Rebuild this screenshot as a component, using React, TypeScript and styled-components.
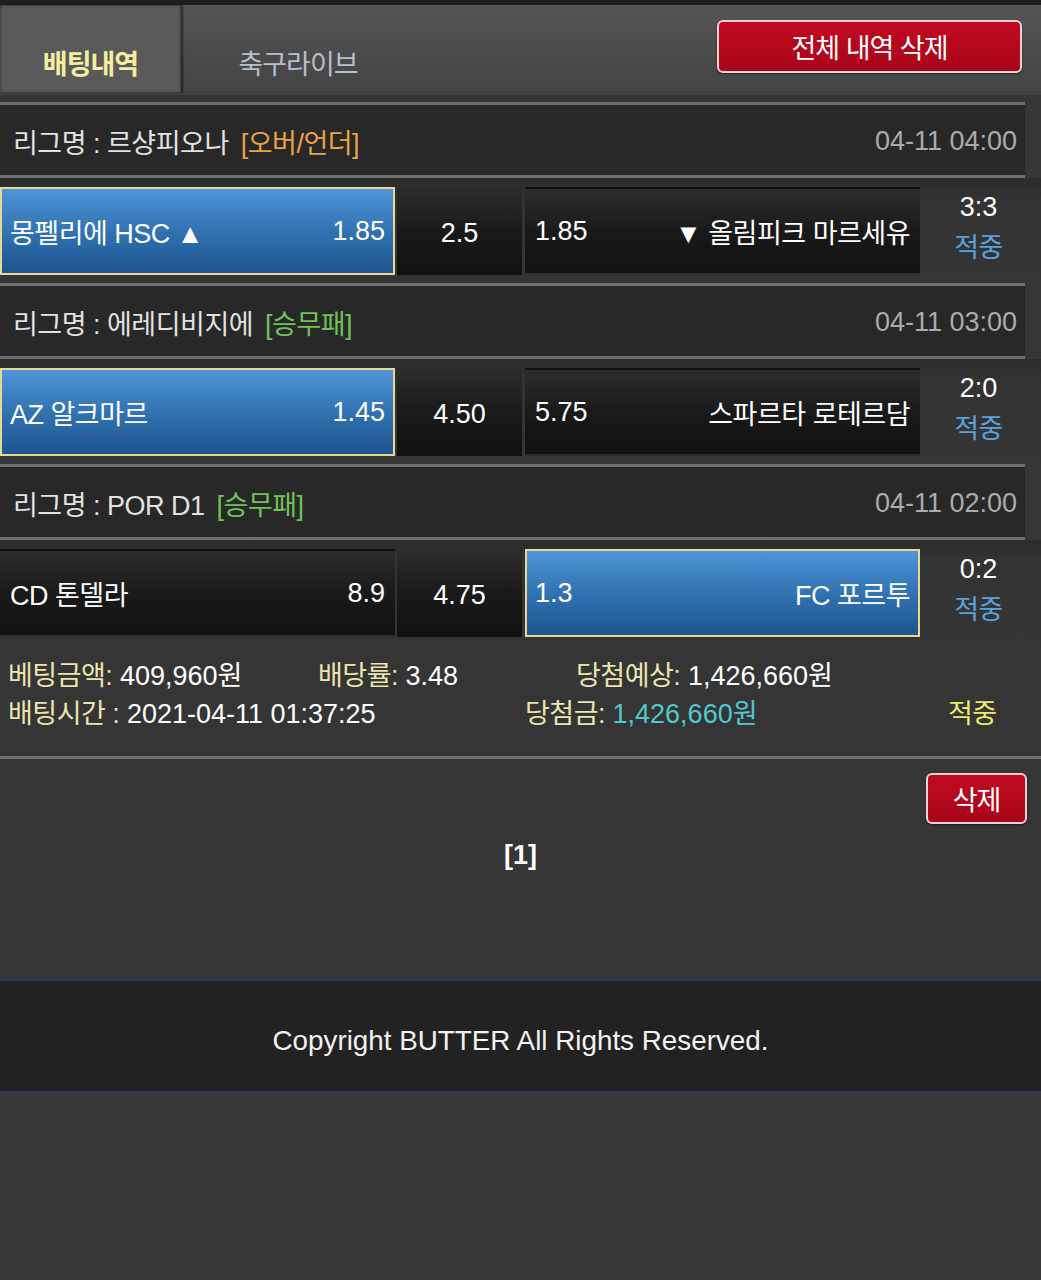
import React from 'react';
import styled, { createGlobalStyle } from 'styled-components';

const GlobalStyle = createGlobalStyle`
  html, body {
    margin: 0;
    padding: 0;
    background: #393939;
  }
  body {
    font-family: "Liberation Sans", "Noto Sans CJK KR", sans-serif;
    color: #f2f2f2;
  }
  * { box-sizing: border-box; }
`;

const Page = styled.div`
  width: 1041px;
  min-height: 1280px;
  background: #393939;
`;

const Main = styled.div`
  background: #363636;
`;

const TopBar = styled.div`
  display: flex;
  height: 95px;
  border-top: 5px solid #1e1e1e;
  background: linear-gradient(#555555, #434343);
  margin-bottom: 7px;
`;

const Tab = styled.div<{ $active?: boolean }>`
  display: flex;
  align-items: flex-end;
  justify-content: center;
  padding-bottom: 11px;
  width: ${(p) => (p.$active ? '181px' : '234px')};
  height: 88px;
  font-size: 27px;
  letter-spacing: -1px;
  font-weight: ${(p) => (p.$active ? 700 : 400)};
  color: ${(p) => (p.$active ? '#f3eea0' : '#b6bfcb')};
  background: ${(p) => (p.$active ? '#595959' : 'transparent')};
  box-shadow: ${(p) => (p.$active ? 'inset 0 0 3px rgba(0,0,0,0.6), 2px 0 2px rgba(0,0,0,0.5)' : 'none')};
`;

const RedButton = styled.button<{ $wide?: boolean }>`
  width: ${(p) => (p.$wide ? '305px' : '101px')};
  height: ${(p) => (p.$wide ? '53px' : '51px')};
  border: 2px solid #ecd2d4;
  border-radius: 6px;
  background: linear-gradient(#c00a20, #a8061a);
  color: #ffffff;
  font-family: inherit;
  font-size: 27px;
  letter-spacing: -1px;
  cursor: pointer;
  box-shadow: 0 1px 2px rgba(0, 0, 0, 0.5);
`;

const TopButtonWrap = styled.div`
  margin-left: auto;
  margin-right: 19px;
  padding-top: 15px;
`;

const LeagueHeader = styled.div`
  display: flex;
  align-items: center;
  justify-content: space-between;
  height: 76px;
  margin-right: 16px;
  padding: 2px 8px 0 13px;
  background: #282828;
  border-top: 3px solid #6e6e6e;
  border-bottom: 3px solid #6e6e6e;
  font-size: 27px;
  color: #e2e2e2;
`;

const LeagueName = styled.span`
  letter-spacing: -0.5px;
`;

const BetType = styled.span<{ $color: string }>`
  margin-left: 12px;
  color: ${(p) => p.$color};
`;

const KickOff = styled.span`
  color: #ababab;
`;

const MatchRow = styled.div`
  display: flex;
  height: 105px;
  padding: 9px 0 8px;
  background: linear-gradient(#2c2c2c, #333333 20%, #353535);
`;

const OddsBox = styled.div<{ $picked?: boolean; $reverse?: boolean }>`
  display: flex;
  align-items: center;
  justify-content: space-between;
  flex-direction: ${(p) => (p.$reverse ? 'row-reverse' : 'row')};
  width: 395px;
  height: 88px;
  padding: 0 8px;
  font-size: 27px;
  color: #ffffff;
  border: 2px solid ${(p) => (p.$picked ? '#e7d98f' : 'transparent')};
  background: ${(p) =>
    p.$picked
      ? 'linear-gradient(#4e95d7, #2f6fae 55%, #1d5590)'
      : 'linear-gradient(#2d2d2d, #1a1a1a 50%, #101010)'};
`;

const DrawBox = styled.div`
  display: flex;
  align-items: center;
  justify-content: center;
  width: 125px;
  height: 88px;
  margin: 0 3px 0 2px;
  padding-top: 4px;
  font-size: 27px;
  color: #ffffff;
  background: linear-gradient(#2d2d2d, #1a1a1a 50%, #101010);
`;

const TeamName = styled.span`
  letter-spacing: -0.5px;
`;

const ScoreCol = styled.div`
  flex: 1;
  display: flex;
  flex-direction: column;
  align-items: center;
  justify-content: center;
  gap: 3px;
  padding-bottom: 6px;
  padding-right: 4px;
  font-size: 27px;
`;

const Score = styled.span`
  color: #ffffff;
`;

const Hit = styled.span<{ $color: string }>`
  color: ${(p) => p.$color};
  letter-spacing: -0.5px;
`;

const Summary = styled.div`
  padding: 9px 8px 26px;
  border-bottom: 3px solid #6e6e6e;
  background: #353535;
  font-size: 27px;
`;

const SummaryRow = styled.div<{ $cols: string }>`
  display: grid;
  grid-template-columns: ${(p) => p.$cols};
  align-items: center;
  height: 38px;
  white-space: nowrap;
`;

const Label = styled.span`
  color: #ebe4ae;
  letter-spacing: -0.5px;
`;

const Value = styled.span<{ $color?: string }>`
  color: ${(p) => p.$color || '#ffffff'};
`;

const ActionBar = styled.div`
  display: flex;
  justify-content: flex-end;
  padding: 14px 14px 0 0;
`;

const Pager = styled.div`
  display: flex;
  justify-content: center;
  padding: 16px 0 0;
  height: 154px;
  font-size: 27px;
  font-weight: 700;
  color: #ffffff;
`;

const Footer = styled.footer`
  display: flex;
  align-items: center;
  justify-content: center;
  height: 113px;
  padding-top: 12px;
  background: #222222;
  border-top: 3px solid #2c3947;
  border-bottom: 3px solid #1c2430;
  font-size: 27.8px;
  color: #f2f2f2;
`;

interface Match {
  league: string;
  type: string;
  typeColor: string;
  time: string;
  home: string;
  homeOdds: string;
  draw: string;
  awayOdds: string;
  away: string;
  pick: 'home' | 'away';
  score: string;
}

const matches: Match[] = [
  {
    league: '르샹피오나',
    type: '[오버/언더]',
    typeColor: '#eba245',
    time: '04-11 04:00',
    home: '몽펠리에 HSC ▲',
    homeOdds: '1.85',
    draw: '2.5',
    awayOdds: '1.85',
    away: '▼ 올림피크 마르세유',
    pick: 'home',
    score: '3:3',
  },
  {
    league: '에레디비지에',
    type: '[승무패]',
    typeColor: '#6fc25a',
    time: '04-11 03:00',
    home: 'AZ 알크마르',
    homeOdds: '1.45',
    draw: '4.50',
    awayOdds: '5.75',
    away: '스파르타 로테르담',
    pick: 'home',
    score: '2:0',
  },
  {
    league: 'POR D1',
    type: '[승무패]',
    typeColor: '#6fc25a',
    time: '04-11 02:00',
    home: 'CD 톤델라',
    homeOdds: '8.9',
    draw: '4.75',
    awayOdds: '1.3',
    away: 'FC 포르투',
    pick: 'away',
    score: '0:2',
  },
];

const App: React.FC = () => (
  <Page>
    <GlobalStyle />
    <Main>
      <TopBar>
        <Tab $active>배팅내역</Tab>
        <Tab>축구라이브</Tab>
        <TopButtonWrap>
          <RedButton $wide>전체 내역 삭제</RedButton>
        </TopButtonWrap>
      </TopBar>

      {matches.map((m) => (
        <div key={m.time}>
          <LeagueHeader>
            <LeagueName>
              리그명 : {m.league}
              <BetType $color={m.typeColor}>{m.type}</BetType>
            </LeagueName>
            <KickOff>{m.time}</KickOff>
          </LeagueHeader>
          <MatchRow>
            <OddsBox $picked={m.pick === 'home'}>
              <TeamName>{m.home}</TeamName>
              <span>{m.homeOdds}</span>
            </OddsBox>
            <DrawBox>{m.draw}</DrawBox>
            <OddsBox $picked={m.pick === 'away'} $reverse>
              <TeamName>{m.away}</TeamName>
              <span>{m.awayOdds}</span>
            </OddsBox>
            <ScoreCol>
              <Score>{m.score}</Score>
              <Hit $color="#5ba2dd">적중</Hit>
            </ScoreCol>
          </MatchRow>
        </div>
      ))}

      <Summary>
        <SummaryRow $cols="310px 258px auto">
          <span>
            <Label>베팅금액:</Label> <Value>409,960원</Value>
          </span>
          <span>
            <Label>배당률:</Label> <Value>3.48</Value>
          </span>
          <span>
            <Label>당첨예상:</Label> <Value>1,426,660원</Value>
          </span>
        </SummaryRow>
        <SummaryRow $cols="517px 423px auto">
          <span>
            <Label>배팅시간 :</Label> <Value>2021-04-11 01:37:25</Value>
          </span>
          <span>
            <Label>당첨금:</Label> <Value $color="#4fc9cc">1,426,660원</Value>
          </span>
          <Hit $color="#eaeb6c">적중</Hit>
        </SummaryRow>
      </Summary>

      <ActionBar>
        <RedButton>삭제</RedButton>
      </ActionBar>
      <Pager>[1]</Pager>
    </Main>
    <Footer>Copyright BUTTER All Rights Reserved.</Footer>
  </Page>
);

export default App;
